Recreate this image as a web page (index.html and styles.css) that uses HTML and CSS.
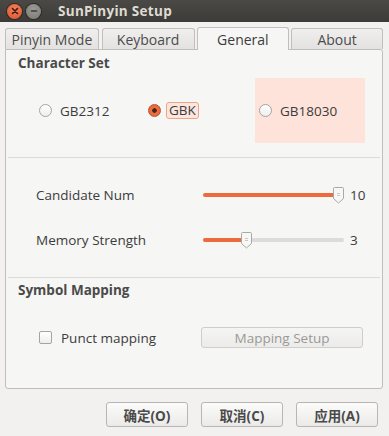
FILE: index.html
```html
<!DOCTYPE html>
<html lang="en">
<head>
    <title>SunPinyin Setup</title>
    <meta charset="UTF-8">
    <link rel="stylesheet" href="styles.css">
</head>
<body>
    <div class="titlebar">
        <span class="win-btn close-btn">
            <svg width="8" height="8" viewBox="0 0 8 8"><path d="M1.5 1.5L6.5 6.5M6.5 1.5L1.5 6.5" stroke="#3a1a10" stroke-width="1.6" stroke-linecap="round"/></svg>
        </span>
        <span class="win-btn min-btn">
            <svg width="8" height="8" viewBox="0 0 8 8"><path d="M1.5 4H6.5" stroke="#3c3b37" stroke-width="1.6" stroke-linecap="round"/></svg>
        </span>
        <span class="title">SunPinyin Setup</span>
    </div>

    <div class="notebook">
        <div class="tabs">
            <div class="tab">Pinyin Mode</div>
            <div class="tab">Keyboard</div>
            <div class="tab active">General</div>
            <div class="tab">About</div>
        </div>

        <div class="panel">
            <!-- Character set -->
            <div class="section charset">
                <div class="section-title">Character Set</div>
                <div class="radio-row">
                    <label class="option"><span class="radio"></span>GB2312</label>
                    <label class="option"><span class="radio checked"></span><span class="focus">GBK</span></label>
                    <label class="option hover"><span class="radio"></span>GB18030</label>
                </div>
            </div>

            <div class="separator"></div>

            <!-- Sliders -->
            <div class="section sliders">
                <div class="slider-row">
                    <span class="slider-label">Candidate Num</span>
                    <div class="slider">
                        <div class="track"><div class="fill" style="width: 135px"></div></div>
                        <svg class="thumb" style="left: 130px" width="11" height="17" viewBox="0 0 11 17"><path d="M1.5 0.5H9.5Q10.5 0.5 10.5 1.5V11.5L5.5 16L0.5 11.5V1.5Q0.5 0.5 1.5 0.5Z" fill="#f7f7f6" stroke="#a9a8a6"/><path d="M4 6.5H7M4 8.5H7" stroke="#c9c8c6"/></svg>
                    </div>
                    <span class="slider-value">10</span>
                </div>
                <div class="slider-row">
                    <span class="slider-label">Memory Strength</span>
                    <div class="slider">
                        <div class="track long"><div class="fill" style="width: 43px"></div></div>
                        <svg class="thumb" style="left: 38px" width="11" height="17" viewBox="0 0 11 17"><path d="M1.5 0.5H9.5Q10.5 0.5 10.5 1.5V11.5L5.5 16L0.5 11.5V1.5Q0.5 0.5 1.5 0.5Z" fill="#f7f7f6" stroke="#a9a8a6"/><path d="M4 6.5H7M4 8.5H7" stroke="#c9c8c6"/></svg>
                    </div>
                    <span class="slider-value">3</span>
                </div>
            </div>

            <div class="separator"></div>

            <!-- Symbol mapping -->
            <div class="section symbols">
                <div class="section-title">Symbol Mapping</div>
                <div class="check-row">
                    <label class="check-option"><span class="checkbox"></span>Punct mapping</label>
                    <button class="gtk-button disabled">Mapping Setup</button>
                </div>
            </div>
        </div>
    </div>

    <div class="dialog-buttons">
        <button class="gtk-button dlg">确定(O)</button>
        <button class="gtk-button dlg">取消(C)</button>
        <button class="gtk-button dlg">应用(A)</button>
    </div>
</body>
</html>
```

FILE: styles.css
```css
* {
    margin: 0;
    padding: 0;
    box-sizing: border-box;
}

body {
    width: 389px;
    height: 436px;
    background: #f2f1f0;
    font-family: "Open Sans", "Noto Sans CJK SC", sans-serif;
    font-size: 13.5px;
    color: #3c3c3c;
    overflow: hidden;
}

/* Window title bar */
.titlebar {
    height: 22px;
    background: linear-gradient(#4a4945, #3c3b37);
    display: flex;
    align-items: center;
    padding-left: 7px;
}

.win-btn {
    width: 15px;
    height: 15px;
    border-radius: 50%;
    display: flex;
    align-items: center;
    justify-content: center;
    margin-right: 4px;
}

.close-btn {
    background: radial-gradient(circle at 50% 35%, #f2825a, #e0502a);
    box-shadow: 0 0 0 1px #2b2a27;
}

.min-btn {
    background: radial-gradient(circle at 50% 35%, #9b9a95, #7a7974);
    box-shadow: 0 0 0 1px #2b2a27;
}

.title {
    margin-left: 13px;
    color: #dfdbd2;
    font-weight: bold;
    font-size: 13.5px;
    letter-spacing: 0.3px;
}

/* Notebook */
.notebook {
    margin: 5px 6px 0 5px;
}

.tabs {
    display: flex;
    gap: 2px;
    height: 22px;
    align-items: flex-end;
    position: relative;
    z-index: 1;
}

.tab {
    width: 93px;
    height: 21px;
    border: 1px solid #c0bfbc;
    border-bottom: none;
    border-radius: 3px 3px 0 0;
    background: linear-gradient(#f0efee, #e3e2e0);
    display: flex;
    align-items: center;
    justify-content: center;
    font-size: 14px;
    color: #4c4c4c;
}

.tab:first-child {
    width: 94px;
    margin-right: 1px;
}

.tab:last-child {
    width: 92px;
}

.tab.active {
    height: 23px;
    margin-bottom: -1px;
    background: #f6f6f5;
    color: #3c3c3c;
}

.panel {
    height: 340px;
    background: #f6f6f5;
    border: 1px solid #bfbebb;
    border-radius: 0 3px 3px 3px;
    padding: 0 2px;
}

.section-title {
    font-weight: bold;
    font-size: 13.5px;
    line-height: 16px;
    color: #4a4a4a;
    padding-left: 10px;
}

.separator {
    height: 1px;
    background: #dcdbd9;
}

.charset {
    height: 107px;
    padding-top: 5px;
}

.radio-row {
    display: grid;
    grid-template-columns: 109px 107px 110px;
    height: 65px;
    margin-top: 7px;
    padding-left: 31px;
}

.option {
    display: flex;
    align-items: center;
    gap: 8px;
}

.option.hover {
    background: #fde3d9;
    padding-left: 4px;
}

.radio {
    width: 13px;
    height: 13px;
    border-radius: 50%;
    border: 1px solid #a5a4a1;
    background: linear-gradient(#ffffff, #eeeeed);
    flex-shrink: 0;
}

.radio.checked {
    border-color: #b5502c;
    background: radial-gradient(circle, #4a2418 0, #4a2418 2px, #e9703f 2.5px, #e56634 100%);
}

.focus {
    border: 1px solid #f0a486;
    background: #fde6dd;
    border-radius: 3px;
    padding: 0 2px;
    margin-left: -3px;
    line-height: 15px;
}

/* Sliders */
.sliders {
    height: 119px;
    padding-top: 27px;
    display: flex;
    flex-direction: column;
    gap: 25px;
}

.slider-row {
    display: flex;
    align-items: center;
    height: 20px;
    padding-left: 28px;
}

.slider-label {
    width: 167px;
}

.slider {
    position: relative;
    width: 147px;
    height: 20px;
    display: flex;
    align-items: center;
}

.track {
    width: 135px;
    height: 4px;
    border-radius: 2px;
    background: #dddcda;
    overflow: hidden;
}

.track.long {
    width: 141px;
}

.fill {
    height: 100%;
    background: #ee6a3c;
}

.thumb {
    position: absolute;
    top: 2px;
}

/* Symbol mapping */
.symbols {
    padding-top: 4px;
}

.check-row {
    display: flex;
    align-items: center;
    margin-top: 29px;
    padding-left: 31px;
}

.check-option {
    display: flex;
    align-items: center;
    gap: 9px;
    width: 162px;
}

.checkbox {
    width: 13px;
    height: 13px;
    border: 1px solid #a5a4a1;
    border-radius: 2px;
    background: linear-gradient(#ffffff, #eeeeed);
}

.gtk-button {
    font-family: "Open Sans", "Noto Sans CJK SC", sans-serif;
    font-size: 13.5px;
    color: #3c3c3c;
    border: 1px solid #b7b6b3;
    border-radius: 3px;
    background: linear-gradient(#fbfbfa, #ebeae8);
}

.gtk-button.disabled {
    width: 162px;
    height: 21px;
    color: #9a9996;
    border-color: #cfcecb;
    background: linear-gradient(#f5f5f4, #ecebea);
}

.dialog-buttons {
    display: flex;
    justify-content: flex-end;
    gap: 13px;
    padding-right: 11px;
    margin-top: 13px;
}

.gtk-button.dlg {
    width: 82px;
    height: 25px;
    font-weight: bold;
    color: #4a4a4a;
}
```
